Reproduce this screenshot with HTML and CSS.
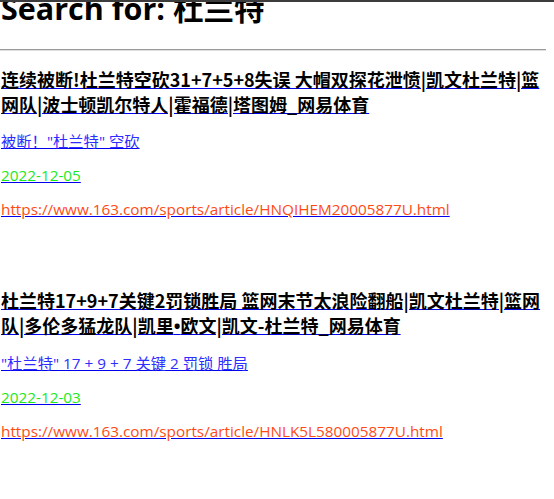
FILE: index.html
```html
<!DOCTYPE html>
<html lang="zh-CN">
<head>
<meta charset="utf-8">
<title>Search for: 杜兰特</title>
<link rel="stylesheet" href="styles.css">
</head>
<body>
<div class="page">
  <h1 class="heading">Search for: 杜兰特</h1>
  <hr class="rule">
  <ul class="results">
    <li class="result">
      <a class="result-link" href="#">
        <h3 class="title">连续被断!杜兰特空砍31+7+5+8失误 大帽双探花泄愤|凯文杜兰特|篮网队|波士顿凯尔特人|霍福德|塔图姆_网易体育</h3>
        <p class="desc">被断！"杜兰特" 空砍</p>
        <p class="date">2022-12-05</p>
        <p class="url">https://www.163.com/sports/article/HNQIHEM20005877U.html</p>
      </a>
    </li>
    <li class="result">
      <a class="result-link" href="#">
        <h3 class="title">杜兰特17+9+7关键2罚锁胜局 篮网末节太浪险翻船|凯文杜兰特|篮网队|多伦多猛龙队|凯里<span class="dot">•</span>欧文|凯文-杜兰特_网易体育</h3>
        <p class="desc">"杜兰特" 17 + 9 + 7 关键 2 罚锁 胜局</p>
        <p class="date">2022-12-03</p>
        <p class="url">https://www.163.com/sports/article/HNLK5L580005877U.html</p>
      </a>
    </li>
  </ul>
</div>
</body>
</html>
```
FILE: styles.css
```css
html, body {
  margin: 0;
  padding: 0;
  background: #fff;
}
body {
  border-top: 2px solid #3c3c3c;
  font-family: "Open Sans", "Noto Sans CJK SC", sans-serif;
  overflow: hidden;
}
.page {
  width: 546px;
  padding: 0 0 0 1px;
  box-sizing: border-box;
}
.heading {
  margin: -14px 0 0 0;
  font-size: 30.5px;
  line-height: 40px;
  font-weight: 700;
  color: #000;
}
.rule {
  margin: 21px 0 0 -1px;
  border: 0;
  border-top: 1px solid #9a9a9a;
  border-bottom: 1px solid #dedede;
  height: 0;
}
.results {
  list-style: none;
  margin: 0;
  padding: 0;
}
.result {
  margin-top: 16px;
}
.result + .result {
  margin-top: 68px;
}
.result-link {
  display: block;
  color: #0000ee;
  text-decoration: underline;
  text-decoration-color: #0000ee;
}
.title {
  margin: 0;
  font-family: "Noto Sans CJK SC", "Open Sans", sans-serif;
  font-size: 18px;
  line-height: 25px;
  font-weight: 700;
  color: #000;
}
.dot {
  font-family: "Open Sans", sans-serif;
}
.desc, .date, .url {
  margin: 13px 0 0 0;
  font-size: 15.3px;
  line-height: 21px;
}
.desc {
  margin-top: 14px;
  color: #2d2dff;
}
.date {
  color: #19ea19;
}
.url {
  color: #ff4a14;
}
```
